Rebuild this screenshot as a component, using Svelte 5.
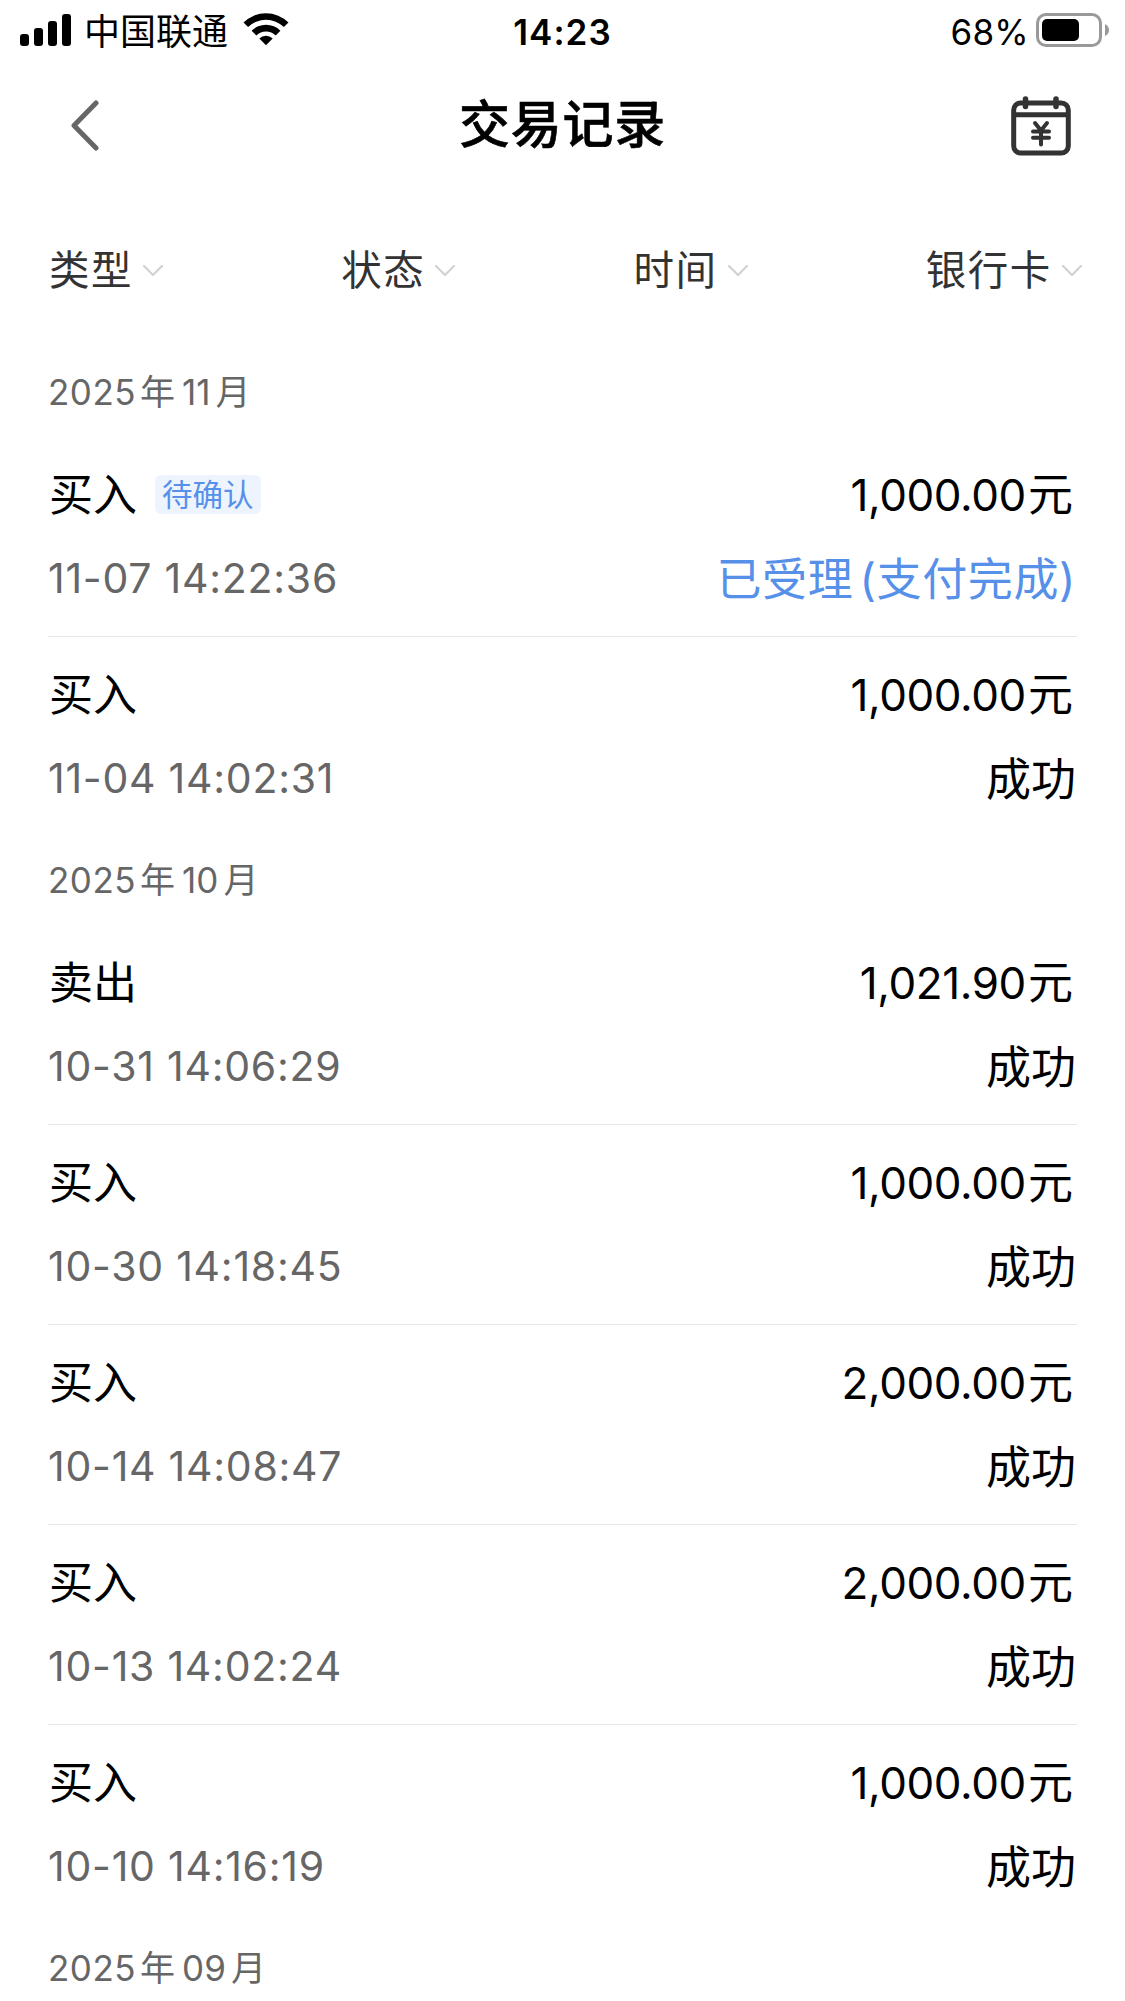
<script>
  const filters = ["类型", "状态", "时间", "银行卡"];

  const groups = [
    {
      year: "2025",
      month: "11",
      records: [
        { type: "买入", tag: "待确认", amount: "1,000.00", time: "11-07 14:22:36", status: "已受理 (支付完成)", pending: true },
        { type: "买入", amount: "1,000.00", time: "11-04 14:02:31", status: "成功" },
      ],
    },
    {
      year: "2025",
      month: "10",
      records: [
        { type: "卖出", amount: "1,021.90", time: "10-31 14:06:29", status: "成功" },
        { type: "买入", amount: "1,000.00", time: "10-30 14:18:45", status: "成功" },
        { type: "买入", amount: "2,000.00", time: "10-14 14:08:47", status: "成功" },
        { type: "买入", amount: "2,000.00", time: "10-13 14:02:24", status: "成功" },
        { type: "买入", amount: "1,000.00", time: "10-10 14:16:19", status: "成功" },
      ],
    },
    { year: "2025", month: "09", records: [] },
  ];
</script>

<div class="page">
  <!-- Phone status bar -->
  <div class="status-bar">
    <div class="status-left">
      <svg class="signal" width="52" height="32" viewBox="0 0 52 32">
        <rect x="0" y="20" width="9" height="12" rx="3" />
        <rect x="14" y="14" width="9" height="18" rx="3" />
        <rect x="28" y="7" width="9" height="25" rx="3" />
        <rect x="42" y="0" width="9" height="32" rx="3" />
      </svg>
      <span class="carrier">中国联通</span>
      <svg class="wifi" width="46" height="34" viewBox="0 0 46 34">
        <path d="M0.5 10.5A32 32 0 0 1 45.5 10.5L40.9 15.1A25.5 25.5 0 0 0 5.1 15.1Z" />
        <path d="M8.6 18.7A20.5 20.5 0 0 1 37.4 18.7L32.7 23.4A14 14 0 0 0 13.3 23.4Z" />
        <path d="M16.3 26.5A9.8 9.8 0 0 1 29.7 26.5L23 33.2Z" />
      </svg>
    </div>
    <span class="clock">14:23</span>
    <div class="status-right">
      <span class="percent">68%</span>
      <svg class="battery" width="74" height="34" viewBox="0 0 74 34">
        <rect x="2.5" y="1.5" width="63" height="31" rx="8.5" fill="none" stroke="#999" stroke-width="3" />
        <rect x="7" y="6" width="37" height="22" rx="5" />
        <path d="M70 11Q74 13 74 17Q74 21 70 23Z" fill="#999" />
      </svg>
    </div>
  </div>

  <header class="nav">
    <button class="nav-btn" aria-label="返回">
      <svg width="28" height="52" viewBox="0 0 28 52">
        <path d="M25 3L3 25.5L25 48" fill="none" stroke="#666" stroke-width="5" stroke-linecap="round" stroke-linejoin="round" />
      </svg>
    </button>
    <h1>交易记录</h1>
    <button class="nav-btn calendar" aria-label="日历">
      <svg width="60" height="60" viewBox="0 0 60 60" fill="none" stroke="#333" stroke-width="5">
        <rect x="2.7" y="7" width="54.6" height="50" rx="7" />
        <path d="M3 18.7H57" />
        <path d="M14.5 3V10.5M45 3V10.5" stroke-width="5.5" stroke-linecap="round" />
        <path d="M24 27L30 34.5L36 27M30 34.5V48.5M22 35.5H38M22 41.8H38" stroke-width="4" stroke-linecap="round" stroke-linejoin="round" />
      </svg>
    </button>
  </header>

  <div class="filters">
    {#each filters as filter}
      <button class="filter">
        <span class="label">{filter}</span>
        <svg width="20" height="12" viewBox="0 0 20 12">
          <path d="M1 1L10 10L19 1" fill="none" stroke="#d2d2d2" stroke-width="2.2" stroke-linecap="round" stroke-linejoin="round" />
        </svg>
      </button>
    {/each}
  </div>

  <main>
    {#each groups as group}
      <section>
        <h2>
          <span class="year">{group.year}</span><span class="cn">年</span><span class="month">{group.month}</span><span class="cn">月</span>
        </h2>
        {#each group.records as record}
          <div class="record">
            <div class="row">
              <div class="type">
                <span>{record.type}</span>
                {#if record.tag}
                  <span class="tag">{record.tag}</span>
                {/if}
              </div>
              <div class="amount">{record.amount}<span class="unit">元</span></div>
            </div>
            <div class="row">
              <span class="time">{record.time}</span>
              <span class="status" class:pending={record.pending}>{record.status}</span>
            </div>
          </div>
        {/each}
      </section>
    {/each}
  </main>
</div>

<style>
:global(body) {
  margin: 0;
  background: #fff;
}

.page {
  width: 1125px;
  height: 2001px;
  overflow: hidden;
  box-sizing: border-box;
  background: #fff;
  color: #000;
  font-family: Inter, "Noto Sans CJK SC", sans-serif;
}

button {
  border: none;
  background: none;
  padding: 0;
  font: inherit;
  color: inherit;
}

svg {
  display: block;
  flex: none;
}

/* Status bar */
.status-bar {
  display: grid;
  grid-template-columns: 1fr auto 1fr;
  align-items: center;
  height: 60px;
  padding: 0 16px;
}

.status-left,
.status-right {
  display: flex;
  align-items: center;
}

.status-left {
  padding-left: 4px;
}

.status-right {
  justify-content: flex-end;
}

.carrier {
  margin-left: 12px;
  padding-top: 5px;
  font-size: 36px;
  line-height: 55px;
}

.wifi {
  margin-left: 15px;
  margin-bottom: 2px;
}

.clock {
  padding-top: 4px;
  font-size: 35px;
  font-weight: 600;
  letter-spacing: 1px;
  line-height: 56px;
}

.percent {
  margin-right: 6px;
  padding-top: 4px;
  font-size: 35px;
  letter-spacing: 0.3px;
  line-height: 56px;
}

/* Title bar */
.nav {
  display: grid;
  grid-template-columns: 1fr auto 1fr;
  align-items: center;
  height: 132px;
  padding: 0 54px;
}

.nav-btn {
  justify-self: start;
  padding-left: 17px;
}

.nav-btn.calendar {
  justify-self: end;
  padding-left: 0;
}

.nav h1 {
  margin: 0;
  padding-bottom: 10px;
  font-size: 51px;
  font-weight: 500;
  letter-spacing: 0.8px;
  -webkit-text-stroke: 0.6px #000;
}

/* Filters */
.filters {
  display: flex;
  justify-content: space-between;
  align-items: center;
  height: 156px;
  padding: 0 43px 0 49px;
  color: #333;
}

.filter {
  display: flex;
  align-items: center;
  gap: 10px;
  font-size: 40.5px;
  letter-spacing: 1.6px;
}

.filter .label {
  margin-top: -6px;
}

.filter svg {
  margin-top: 1px;
}

/* Records */
main {
  padding: 1px 48px 0;
}

h2 {
  display: flex;
  align-items: center;
  height: 88px;
  margin: 0;
  padding-bottom: 3px;
  box-sizing: border-box;
  font-size: 35px;
  font-weight: 400;
  color: #666;
}

.cn {
  margin-bottom: 4px;
}

.year {
  margin-right: 4px;
  letter-spacing: 0.5px;
}

.month {
  margin: 0 5px 0 7px;
}

.record {
  box-sizing: border-box;
  height: 200px;
  padding-top: 12px;
  border-bottom: 1px solid #e8e8e8;
}

.record:last-child {
  border-bottom: none;
}

.row {
  display: flex;
  justify-content: space-between;
  align-items: center;
  height: 86px;
  font-size: 44px;
}

.type {
  display: flex;
  align-items: center;
  padding-left: 1px;
}

.tag {
  margin: 5px 0 0 18px;
  padding: 0 7px;
  border-radius: 6px;
  background: #edf4fd;
  color: #5690e9;
  font-size: 30.5px;
  line-height: 39px;
}

.amount {
  padding: 0 4px 2px 0;
  letter-spacing: -0.4px;
}

.unit {
  margin-left: 2px;
  font-size: 45px;
  letter-spacing: 0;
}

.time {
  color: #666;
  font-size: 41px;
  letter-spacing: 0.75px;
}

.status {
  padding: 0 1px 4px 0;
  font-size: 45px;
}

.status.pending {
  padding-right: 1px;
  color: #5690e9;
  letter-spacing: 0.6px;
  word-spacing: -7px;
}
</style>
